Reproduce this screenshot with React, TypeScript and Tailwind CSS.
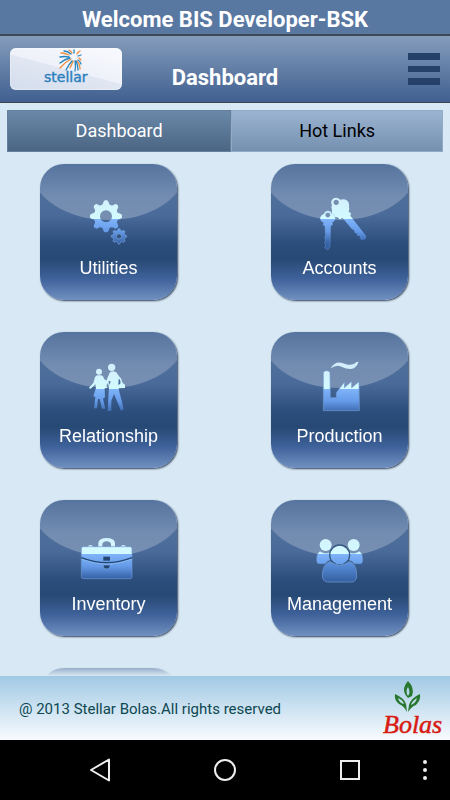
import React, { useState } from 'react';

interface Tile {
  label: string;
  viewBox: string;
  icon: React.ReactNode;
}

/* ================= ICON HELPERS ================= */
const gearPath = (cx: number, cy: number, r: number, hole: number) => {
  const steps = 96;
  let d = '';
  for (let i = 0; i < steps; i++) {
    const a = (i / steps) * Math.PI * 2;
    const wave = Math.max(-1, Math.min(1, Math.cos(a * 8) * 1.5));
    const rad = r * (0.88 + 0.12 * wave);
    d += `${i ? 'L' : 'M'}${(cx + rad * Math.cos(a)).toFixed(2)} ${(cy + rad * Math.sin(a)).toFixed(2)}`;
  }
  return `${d}Z M${cx - hole} ${cy}a${hole} ${hole} 0 1 0 ${hole * 2} 0a${hole} ${hole} 0 1 0 ${-hole * 2} 0Z`;
};

const IconGradients = () => (
  <svg className="absolute size-0" aria-hidden="true">
    <defs>
      <linearGradient id="ice" gradientUnits="userSpaceOnUse" x1="0" y1="110" x2="0" y2="290">
        <stop offset="0" stopColor="#d3ebfb" />
        <stop offset="0.45" stopColor="#d2fbff" />
        <stop offset="0.46" stopColor="#7fb4fa" />
        <stop offset="0.66" stopColor="#659ae8" />
        <stop offset="0.85" stopColor="#3965aa" />
        <stop offset="1" stopColor="#315b9b" />
      </linearGradient>
      <linearGradient id="body" gradientUnits="userSpaceOnUse" x1="0" y1="214" x2="0" y2="276">
        <stop offset="0" stopColor="#5f95e4" />
        <stop offset="1" stopColor="#335f9f" />
      </linearGradient>
    </defs>
  </svg>
);

/* ================= TILES ================= */
const TILES: Tile[] = [
  {
    label: 'Utilities',
    viewBox: '30 27 411 276',
    icon: (
      <g fillRule="evenodd">
        <path d={gearPath(228, 184, 48, 18)} />
        <path d={gearPath(267, 244, 23, 8)} stroke="#7fa9df" strokeWidth="2" />
      </g>
    )
  },
  {
    label: 'Accounts',
    viewBox: '33 27 411 276',
    icon: (
      <g fillRule="evenodd">
        <path d="M214 139Q217 128 229 128Q237 129 241 134Q252 130 262 137Q269 144 267 157Q270 164 266 170L273 175L271 182L319 244L317 253L304 255L299 249L300 243L292 243L291 236L284 233L282 225L276 223L247 188L240 194L233 187L222 186Q213 178 216 165Q211 157 216 151Q212 146 214 139ZM228 134a8 8 0 1 0 1 0Z" />
        <path d="M192 176Q195 167 204 167Q212 167 215 176Q226 179 226 192Q224 199 217 202L218 209L212 213L210 275L204 285L197 281L194 276L197 269L193 263L197 256L194 249L196 242L195 214L189 209L191 203Q180 197 180 188Q183 179 192 176ZM203 173a7 7 0 1 0 1 0Z" stroke="#7da5dc" strokeWidth="1" />
      </g>
    )
  },
  {
    label: 'Relationship',
    viewBox: '30 21 411 276',
    icon: (
      <g>
        <circle cx="207" cy="140" r="9" />
        <circle cx="245" cy="127" r="11" />
        <path d="M201 151L214 151Q221 153 222 161L229 167L239 143Q242 139 250 139L259 142L268 155L273 160L278 174L285 179L285 189L266 190L268 200L276 230L281 253L273 257L261 229L252 207L244 227L244 258L233 258L235 218L237 187L234 173L229 182L232 189L224 190L225 217L219 221L226 251L216 251L209 222L204 222L201 250L192 250L196 216L190 214L198 188L196 178L181 192L177 188L190 174L195 156Z" />
        <path d="M266 161Q273 164 271 176L265 180Z" fill="#456b9d" />
        <path d="M235 169L239 180L242 168Z" fill="#58779f" />
      </g>
    )
  },
  {
    label: 'Production',
    viewBox: '33 21 411 276',
    icon: (
      <g>
        <path d="M190 143Q191 137 200 137Q209 137 210 143L211 218L229 218L229 203L254 170L253 188L275 169L275 188L297 170L298 257L190 257Z" stroke="#7199d2" strokeWidth="2" />
        <path d="M212 130Q224 109 244 113L263 119Q282 121 288 112L296 110Q289 130 272 132Q258 132 244 125Q230 118 212 130Z" />
      </g>
    )
  },
  {
    label: 'Inventory',
    viewBox: '30 30 411 276',
    icon: (
      <g>
        <path d="M205 171V158Q208 144 230 144Q252 144 255 158V171H243V162Q240 154 230 154Q220 154 217 162V171Z" />
        <path d="M174 171Q174 165 181 165Q188 165 189 171ZM272 171Q273 165 280 165Q287 165 288 171Z" />
        <rect x="154" y="170" width="152" height="96" rx="6" stroke="#6c98d5" strokeWidth="2" />
        <path d="M154 203Q230 233 306 203" fill="none" stroke="#234772" strokeWidth="4" />
        <path d="M155 208Q230 238 305 208" fill="none" stroke="#93bdf1" strokeWidth="2" />
        <rect x="220" y="200" width="20" height="12" fill="#234772" />
        <path d="M220 225H240V231Q237 237 230 237Q223 237 220 231Z" fill="#234772" stroke="#7aa8e8" strokeWidth="2" />
      </g>
    )
  },
  {
    label: 'Management',
    viewBox: '33 30 411 276',
    icon: (
      <g>
        <path d="M180 184Q197 195 211 186V209Q200 213 195 221H177Q169 220 170 209Q170 190 180 184Z" stroke="#6c98cc" strokeWidth="1" />
        <path d="M298 184Q281 195 267 186V209Q278 213 283 221H301Q309 220 308 209Q308 190 298 184Z" stroke="#6c98cc" strokeWidth="1" />
        <circle cx="197" cy="165" r="18" />
        <circle cx="281" cy="165" r="18" />
        <circle cx="239" cy="195" r="30" stroke="#355983" strokeWidth="4" />
        <path d="M210 215Q239 236 268 215Q290 221 290 256Q290 275 275 276H203Q187 275 187 256Q188 222 210 215Z" fill="url(#body)" stroke="#759fd8" strokeWidth="2" />
      </g>
    )
  }
];

const TileButton: React.FC<{ tile?: Tile }> = ({ tile }) => (
  <button
    aria-label={tile ? undefined : 'More'}
    className="relative flex h-[136px] w-[137px] flex-col items-center overflow-hidden rounded-3xl bg-[linear-gradient(to_bottom,#56749f_0%,#4a6b9a_38%,#2c4e7c_58%,#274974_70%,#3e619a_84%,#7090c0_100%)] font-['Liberation_Sans',sans-serif] text-lg text-white shadow-[1px_1px_2px_#34435c]"
  >
    {/* gloss */}
    <span className="absolute -inset-x-2 -top-11 h-[100px] rounded-[50%] bg-[linear-gradient(to_bottom,#ffffff00_44%,#ffffff33_75%,#ffffff40_100%)]" />
    {tile && (
      <>
        <svg className="relative h-[92px] w-full shrink-0" viewBox={tile.viewBox} fill="url(#ice)" aria-hidden="true">
          {tile.icon}
        </svg>
        <span className="leading-6">{tile.label}</span>
      </>
    )}
  </button>
);

/* ================= LOGOS ================= */
const StellarLogo = () => (
  <svg className="h-[42px] w-28" viewBox="0 0 112 42" role="img" aria-label="stellar">
    <g fill="none" strokeWidth="1.3" strokeLinecap="round">
      <path
        stroke="#ef8d3b"
        d="M59 7Q55 5 51 5M61 11Q55 14 50 20M63 13Q62 16 60 20M67 13Q70 16 70 21M62 5Q61 3 59 2M67 6Q68 4 70 3M69 10L71 12"
      />
      <path
        stroke="#2584bd"
        d="M59 9Q54 8 50 9M60 10Q55 11 50 15M62 13Q59 16 56 22M65 13Q66 17 65 23M66 13Q68 17 68 22M61 6Q58 3 54 3M64 5L64 2M68 8L71 7M68 12Q70 13 71 16"
      />
    </g>
    <text x="34" y="34" fontSize="14" fill="#2b7fbd" stroke="#2b7fbd" strokeWidth="0.4" fontFamily="DejaVu Sans, sans-serif">
      stellar
    </text>
  </svg>
);

const BolasLogo = () => (
  <svg className="h-[60px] w-[60px] shrink-0" viewBox="0 0 60 60" role="img" aria-label="Bolas">
    <g fill="#27782e" fillRule="evenodd">
      <path d="M26 3Q33 10 30 18L26 20Q18 12 26 3ZM26 9Q23 13 26 18Q29 14 26 9Z" />
      <path d="M13 16Q22 20 24 26L25 34Q22 28 17 26Q12 22 13 16ZM16 20Q17 25 22 26Q21 22 16 20Z" />
      <path d="M38 16Q29 20 27 27L26 34Q30 28 34 27Q39 22 38 16ZM35 20Q30 23 29 27Q34 25 35 20Z" />
    </g>
    <text x="1" y="55" fontSize="26" fontStyle="italic" fill="#d81b12" stroke="#d81b12" strokeWidth="0.5" fontFamily="Liberation Serif, serif">
      Bolas
    </text>
  </svg>
);

/* ================= APP ================= */
const App: React.FC = () => {
  const [tab, setTab] = useState('Dashboard');

  return (
    <div className="flex h-screen flex-col bg-[#d8e9f5] font-[Roboto,sans-serif]">
      <IconGradients />

      {/* Welcome bar */}
      <div className="flex h-9 shrink-0 items-center justify-center border-b-2 border-[#3d4856] bg-[#5878a2] pt-1.5">
        <p className="text-[22px] leading-7 font-bold text-white">Welcome BIS Developer-BSK</p>
      </div>

      {/* Header */}
      <header className="grid h-[67px] shrink-0 grid-cols-[1fr_auto_1fr] items-center border-b border-[#3f4550] bg-linear-to-b from-[#859dbc] to-[#416090] px-2.5">
        <div className="w-28 rounded-md bg-[linear-gradient(195deg,#f9fafe_0%,#eef1f9_50%,#e1e7f2_51%,#d3dded_100%)] shadow-[inset_0_0_2px_white]">
          <StellarLogo />
        </div>
        <h1 className="pt-[18px] text-[22px] leading-7 font-bold text-white">Dashboard</h1>
        <button className="justify-self-end" aria-label="Menu">
          <svg className="h-8 w-8" viewBox="0 0 32 32" fill="#25416a">
            <path d="M0 0h32v7H0zM0 13h32v6H0zM0 25h32v7H0z" />
          </svg>
        </button>
      </header>

      {/* Tabs */}
      <div className="mx-[7px] mt-[7px] grid h-[42px] shrink-0 grid-cols-[18fr_17fr] text-lg">
        {['Dashboard', 'Hot Links'].map(name => (
          <button
            key={name}
            onClick={() => setTab(name)}
            className={tab === name
              ? 'border border-[#64809d] bg-linear-to-b from-[#6a88a8] to-[#4b6684] text-white'
              : 'border border-[#91abc7] bg-linear-to-b from-[#9bb4d1] to-[#7590b0] text-black'}
          >
            {name}
          </button>
        ))}
      </div>

      {/* Modules */}
      <main className="grid min-h-0 flex-1 grid-cols-[auto_auto] content-start justify-between gap-y-8 overflow-hidden pt-3 pr-[42px] pl-10 [mask-image:linear-gradient(to_bottom,black_calc(100%-16px),transparent)]">
        {TILES.map(tile => (
          <TileButton key={tile.label} tile={tile} />
        ))}
        <TileButton />
      </main>

      {/* Footer */}
      <footer className="flex h-16 shrink-0 items-center justify-between bg-linear-to-b from-[#a1c9e4] to-[#f8fbfe] pr-2 pl-[19px]">
        <p className="pt-0.5 text-[15px] text-[#0d4750]">@ 2013 Stellar Bolas.All rights reserved</p>
        <BolasLogo />
      </footer>

      {/* System navigation */}
      <nav className="grid h-[60px] shrink-0 grid-cols-[1fr_125px_125px_125px_1fr] items-center justify-items-center bg-black">
        <span />
        <button aria-label="Back">
          <svg className="size-6" viewBox="0 0 24 24" fill="none" stroke="#eee" strokeWidth="2">
            <path d="M3 12L21 1.500V22.500Z" strokeLinejoin="round" />
          </svg>
        </button>
        <button aria-label="Home">
          <svg className="size-6" viewBox="0 0 24 24" fill="none" stroke="#eee" strokeWidth="2">
            <circle cx="12" cy="12" r="10" />
          </svg>
        </button>
        <button aria-label="Recent apps">
          <svg className="size-6" viewBox="0 0 24 24" fill="none" stroke="#eee" strokeWidth="2">
            <rect x="3" y="3" width="18" height="18" />
          </svg>
        </button>
        <button className="pr-3" aria-label="More options">
          <svg className="h-6 w-2" viewBox="0 0 8 24" fill="#eee">
            <circle cx="4" cy="4" r="2" />
            <circle cx="4" cy="12" r="2" />
            <circle cx="4" cy="20" r="2" />
          </svg>
        </button>
      </nav>
    </div>
  );
};

export default App;
